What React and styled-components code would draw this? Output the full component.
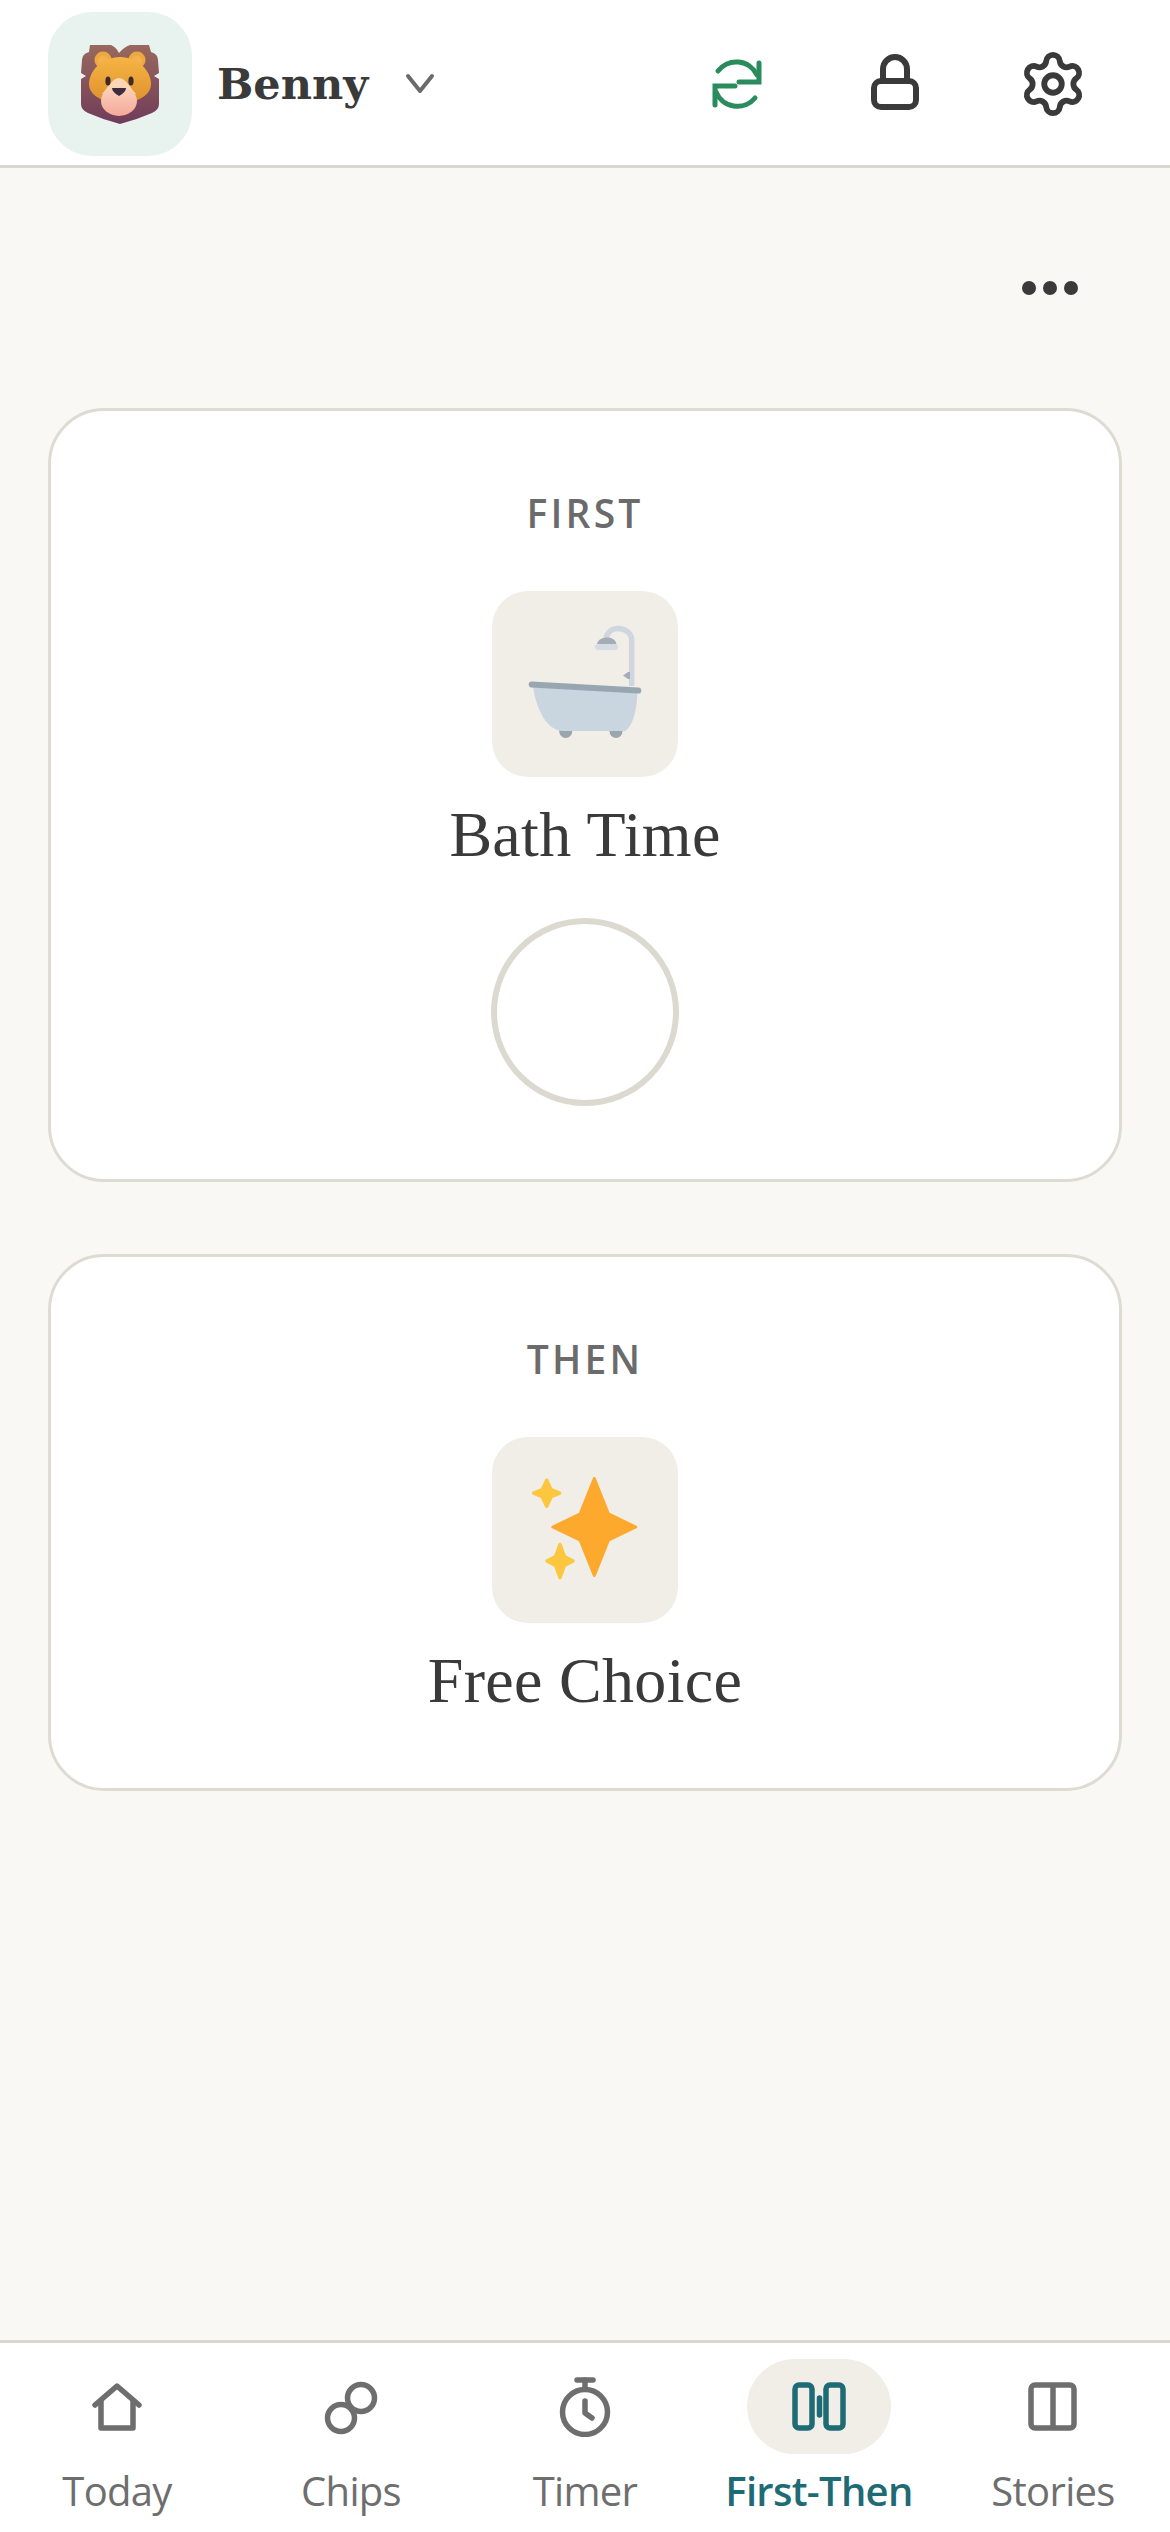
import styled, { createGlobalStyle } from 'styled-components';

const GlobalStyle = createGlobalStyle`
  html, body {
    margin: 0;
    padding: 0;
    background: #f9f8f4;
  }
  * {
    box-sizing: border-box;
  }
`;

const Page = styled.div`
  min-height: 100vh;
  display: flex;
  flex-direction: column;
  font-family: "Open Sans", sans-serif;
  color: #3a3a3a;
`;

const Header = styled.header`
  height: 168px;
  flex: none;
  display: flex;
  align-items: center;
  padding: 3px 77px 0 48px;
  background: #ffffff;
  border-bottom: 3px solid #d9d7d0;
`;

const Avatar = styled.div`
  width: 144px;
  height: 144px;
  border-radius: 44px;
  background: #e8f3f0;
  display: flex;
  align-items: center;
  justify-content: center;
`;

const Name = styled.span`
  margin-left: 25px;
  font-family: "DejaVu Serif", serif;
  font-weight: 700;
  font-size: 43px;
  color: #3a3a3a;
`;

const Chevron = styled.svg`
  margin-left: 36px;
  flex: none;
`;

const Actions = styled.div`
  margin-left: auto;
  display: flex;
  align-items: center;
  gap: 78px;
`;

const IconButton = styled.div`
  width: 80px;
  height: 80px;
  display: flex;
  align-items: center;
  justify-content: center;
`;

const Main = styled.main`
  flex: 1;
  padding: 90px 48px 0;
`;

const MoreRow = styled.div`
  display: flex;
  justify-content: flex-end;
  padding-right: 44px;
  margin-bottom: 90px;
`;

const MoreButton = styled.div`
  width: 56px;
  height: 60px;
  display: flex;
  align-items: center;
  justify-content: space-between;
`;

const Dot = styled.span`
  width: 14px;
  height: 14px;
  border-radius: 50%;
  background: #3a3a3a;
`;

const Card = styled.section`
  display: flex;
  flex-direction: column;
  align-items: center;
  background: #ffffff;
  border: 3px solid #dddbd2;
  border-radius: 56px;
  padding: 75px 0 71px;
  margin-bottom: 72px;
`;

const CardLabel = styled.div`
  font-size: 39px;
  line-height: 54px;
  font-weight: 600;
  letter-spacing: 3.2px;
  color: #6b6b6b;
`;

const IconTile = styled.div`
  margin-top: 51px;
  width: 186px;
  height: 186px;
  border-radius: 36px;
  background: #f1eee8;
  display: flex;
  align-items: center;
  justify-content: center;
`;

const CardTitle = styled.div`
  margin-top: 22px;
  font-family: "Liberation Serif", serif;
  font-size: 64px;
  line-height: 72px;
  letter-spacing: 0.3px;
  color: #3a3a3a;
`;

const DoneCircle = styled.div`
  margin-top: 47px;
  margin-bottom: 2px;
  width: 188px;
  height: 188px;
  border-radius: 50%;
  border: 6px solid #dcdad0;
`;

const BottomNav = styled.nav`
  height: 192px;
  flex: none;
  display: grid;
  grid-template-columns: repeat(5, 1fr);
  padding-top: 16px;
  background: #ffffff;
  border-top: 3px solid #d9d7d0;
`;

const NavItem = styled.div`
  display: flex;
  flex-direction: column;
  align-items: center;
  color: ${(p) => (p.$active ? '#1f6b75' : '#6e6e6e')};
`;

const NavIcon = styled.div`
  width: 144px;
  height: 95px;
  border-radius: 48px;
  background: ${(p) => (p.$active ? '#f1eee8' : 'transparent')};
  display: flex;
  align-items: center;
  justify-content: center;
`;

const NavLabel = styled.div`
  margin-top: 10px;
  font-size: 40px;
  line-height: 54px;
  font-weight: ${(p) => (p.$active ? 600 : 400)};
  letter-spacing: -0.7px;
  white-space: nowrap;
`;

const Lion = () => (
  <svg width="80" height="80" viewBox="0 0 80 80">
    <defs>
      <linearGradient id="mane" x1="0" y1="0" x2="0" y2="1">
        <stop offset="0" stopColor="#98695d" />
        <stop offset="1" stopColor="#713b5a" />
      </linearGradient>
      <linearGradient id="face" x1="0" y1="0" x2="0" y2="1">
        <stop offset="0" stopColor="#f6b544" />
        <stop offset="1" stopColor="#dd8f2c" />
      </linearGradient>
      <linearGradient id="muzzle" x1="0" y1="0" x2="0" y2="1">
        <stop offset="0" stopColor="#fbd3bd" />
        <stop offset="1" stopColor="#f6a99a" />
      </linearGradient>
    </defs>
    <path
      d="M10 1 H31 Q36 3 39 9 Q44 3 50 1 H69 L71 8 Q78 10 78 16 L79 29 L74 32 L79 35 V60 Q79 66 72 69 Q56 76 40 80 Q24 76 8 69 Q1 66 1 60 V35 L6 32 L1 29 L2 16 Q2 10 9 8 Z"
      fill="url(#mane)"
    />
    <circle cx="23" cy="16" r="8.5" fill="#eda93e" />
    <circle cx="57" cy="16" r="8.5" fill="#eda93e" />
    <circle cx="23" cy="17" r="5" fill="#f0b254" />
    <circle cx="57" cy="17" r="5" fill="#f0b254" />
    <path
      d="M40 13 C58 13 71 27 71 40 C71 50 60 58 40 60 C20 58 9 50 9 40 C9 27 22 13 40 13 Z"
      fill="url(#face)"
    />
    <path d="M39 34 C46 34 50 44 56 50 L22 50 C28 44 32 34 39 34 Z" fill="#fbd7b4" />
    <ellipse cx="39" cy="57" rx="18" ry="15" fill="url(#muzzle)" />
    <ellipse cx="28" cy="37" rx="2.6" ry="4.6" fill="#3b2a2a" />
    <ellipse cx="51" cy="37" rx="2.6" ry="4.6" fill="#3b2a2a" />
    <path d="M32 44 H46 Q46 48 39 52 Q32 48 32 44 Z" fill="#3d2c3e" />
  </svg>
);

const RefreshIcon = () => (
  <svg width="60" height="60" viewBox="0 0 60 60" fill="none" stroke="#2a8c5c" strokeWidth="5" strokeLinecap="round" strokeLinejoin="miter">
    <path d="M11 17 A23 23 0 0 1 50 21" />
    <path d="M52 9 V28 H32" />
    <path d="M48 44 A23 23 0 0 1 9 38" />
    <path d="M8 51 V32 H28" />
  </svg>
);

const LockIcon = () => (
  <svg width="60" height="64" viewBox="0 2 60 64" fill="none" stroke="#3a3a3a" strokeWidth="6">
    <rect x="9" y="31" width="42" height="26" rx="7" />
    <path d="M18 31 V19 a12 12 0 0 1 24 0 V31" />
  </svg>
);

const GearIcon = () => (
  <svg width="70" height="70" viewBox="0 0 24 24" fill="none" stroke="#3a3a3a" strokeWidth="2" strokeLinecap="round" strokeLinejoin="round">
    <path d="M9.671 4.136a2.34 2.34 0 0 1 4.659 0 2.34 2.34 0 0 0 3.319 1.915 2.34 2.34 0 0 1 2.33 4.033 2.34 2.34 0 0 0 0 3.831 2.34 2.34 0 0 1-2.33 4.033 2.34 2.34 0 0 0-3.319 1.915 2.34 2.34 0 0 1-4.659 0 2.34 2.34 0 0 0-3.32-1.915 2.34 2.34 0 0 1-2.33-4.033 2.34 2.34 0 0 0 0-3.831A2.34 2.34 0 0 1 6.35 6.051a2.34 2.34 0 0 0 3.319-1.915" />
    <circle cx="12" cy="12" r="3" />
  </svg>
);

const BathIcon = () => (
  <svg width="120" height="120" viewBox="0 0 120 120" fill="none">
    <path d="M106.7 62 V16 C106.7 9 100 4.5 93 4.5 C87 4.5 82.5 8 81 14" stroke="#cfd6e0" strokeWidth="5.5" />
    <path d="M72 20 C73 15 78 13.5 82 13.5 C86 13.5 90.5 15 91.5 20 Z" fill="#a3adb5" />
    <rect x="70" y="20" width="23" height="6" rx="3" fill="#d6dce4" />
    <path d="M98 51.5 L103 48 H105 V55 H103 Z" fill="#a3adb5" />
    <ellipse cx="40.7" cy="107.5" rx="6.5" ry="6.5" fill="#9aa5ad" />
    <ellipse cx="91" cy="107.5" rx="6.5" ry="6.5" fill="#9aa5ad" />
    <path d="M8 62 C11 85 22 107 38 107 H100 C108 102 112 85 112.5 67 Z" fill="#c9d5df" />
    <path d="M6.7 60.5 L113.3 66.5" stroke="#98a6b1" strokeWidth="6" strokeLinecap="round" />
  </svg>
);

// four-point star, tips and waist rounded off by the stroke join
const sparklePath = (cx, cy, rx, ry) => {
  const w = rx * 0.34;
  const h = ry * 0.27;
  return `M${cx} ${cy - ry} L${cx + w} ${cy - h} L${cx + rx} ${cy} L${cx + w} ${cy + h} L${cx} ${cy + ry} L${cx - w} ${cy + h} L${cx - rx} ${cy} L${cx - w} ${cy - h} Z`;
};

const SparkleIcon = () => (
  <svg width="120" height="120" viewBox="0 0 120 120">
    <path d={sparklePath(69.3, 57, 41.5, 48.5)} fill="#fda92d" stroke="#fda92d" strokeWidth="3" strokeLinejoin="round" />
    <path d={sparklePath(21.7, 23.2, 13, 13)} fill="#fcc63f" stroke="#fcc63f" strokeWidth="3.5" strokeLinejoin="round" />
    <path d={sparklePath(35, 91, 13, 16.5)} fill="#fcc63f" stroke="#fcc63f" strokeWidth="3.5" strokeLinejoin="round" />
  </svg>
);

const HomeIcon = () => (
  <svg width="60" height="60" viewBox="0 0 60 60" fill="none" stroke="currentColor" strokeWidth="5.5" strokeLinecap="round" strokeLinejoin="round">
    <path d="M8 28 L30 9 L52 28" />
    <path d="M14 24 V51 H46 V24" />
  </svg>
);

const ChipsIcon = () => (
  <svg width="60" height="60" viewBox="0 0 60 60" fill="none" stroke="currentColor" strokeWidth="5.5">
    <circle cx="40" cy="21" r="13.5" />
    <circle cx="20" cy="41" r="13.5" />
  </svg>
);

const TimerIcon = () => (
  <svg width="60" height="60" viewBox="0 0 60 60" fill="none" stroke="currentColor" strokeWidth="5.5" strokeLinecap="round" strokeLinejoin="round">
    <circle cx="30" cy="35" r="22.5" />
    <path d="M22 3 H38" />
    <path d="M30 3 V12" />
    <path d="M30 24 V36 L37 41" />
  </svg>
);

const FirstThenIcon = () => (
  <svg width="60" height="60" viewBox="0 0 60 60" fill="none" stroke="currentColor" strokeWidth="5.5">
    <rect x="6" y="8" width="17" height="43" rx="4" />
    <rect x="37" y="8" width="17" height="43" rx="4" />
    <path d="M30.5 21 V38" strokeLinecap="round" />
  </svg>
);

const StoriesIcon = () => (
  <svg width="60" height="60" viewBox="0 0 60 60" fill="none" stroke="currentColor" strokeWidth="5.5">
    <rect x="8" y="8" width="43" height="43" rx="4" />
    <path d="M30 8 V51" />
  </svg>
);

const navItems = [
  { label: 'Today', Icon: HomeIcon },
  { label: 'Chips', Icon: ChipsIcon },
  { label: 'Timer', Icon: TimerIcon },
  { label: 'First-Then', Icon: FirstThenIcon, active: true },
  { label: 'Stories', Icon: StoriesIcon },
];

const App = () => {
  return (
    <Page>
      <GlobalStyle />
      <Header>
        <Avatar>
          <Lion />
        </Avatar>
        <Name>Benny</Name>
        <Chevron width="32" height="24" viewBox="0 0 32 24" fill="none" stroke="#6b6b6b" strokeWidth="4" strokeLinecap="round" strokeLinejoin="round">
          <path d="M4 4 L16 19 L28 4" />
        </Chevron>
        <Actions>
          <IconButton>
            <RefreshIcon />
          </IconButton>
          <IconButton>
            <LockIcon />
          </IconButton>
          <IconButton>
            <GearIcon />
          </IconButton>
        </Actions>
      </Header>

      <Main>
        <MoreRow>
          <MoreButton>
            <Dot />
            <Dot />
            <Dot />
          </MoreButton>
        </MoreRow>

        <Card>
          <CardLabel>FIRST</CardLabel>
          <IconTile>
            <BathIcon />
          </IconTile>
          <CardTitle>Bath Time</CardTitle>
          <DoneCircle />
        </Card>

        <Card>
          <CardLabel>THEN</CardLabel>
          <IconTile>
            <SparkleIcon />
          </IconTile>
          <CardTitle>Free Choice</CardTitle>
        </Card>
      </Main>

      <BottomNav>
        {navItems.map(({ label, Icon, active }) => (
          <NavItem key={label} $active={active}>
            <NavIcon $active={active}>
              <Icon />
            </NavIcon>
            <NavLabel $active={active}>{label}</NavLabel>
          </NavItem>
        ))}
      </BottomNav>
    </Page>
  );
};

export default App;
